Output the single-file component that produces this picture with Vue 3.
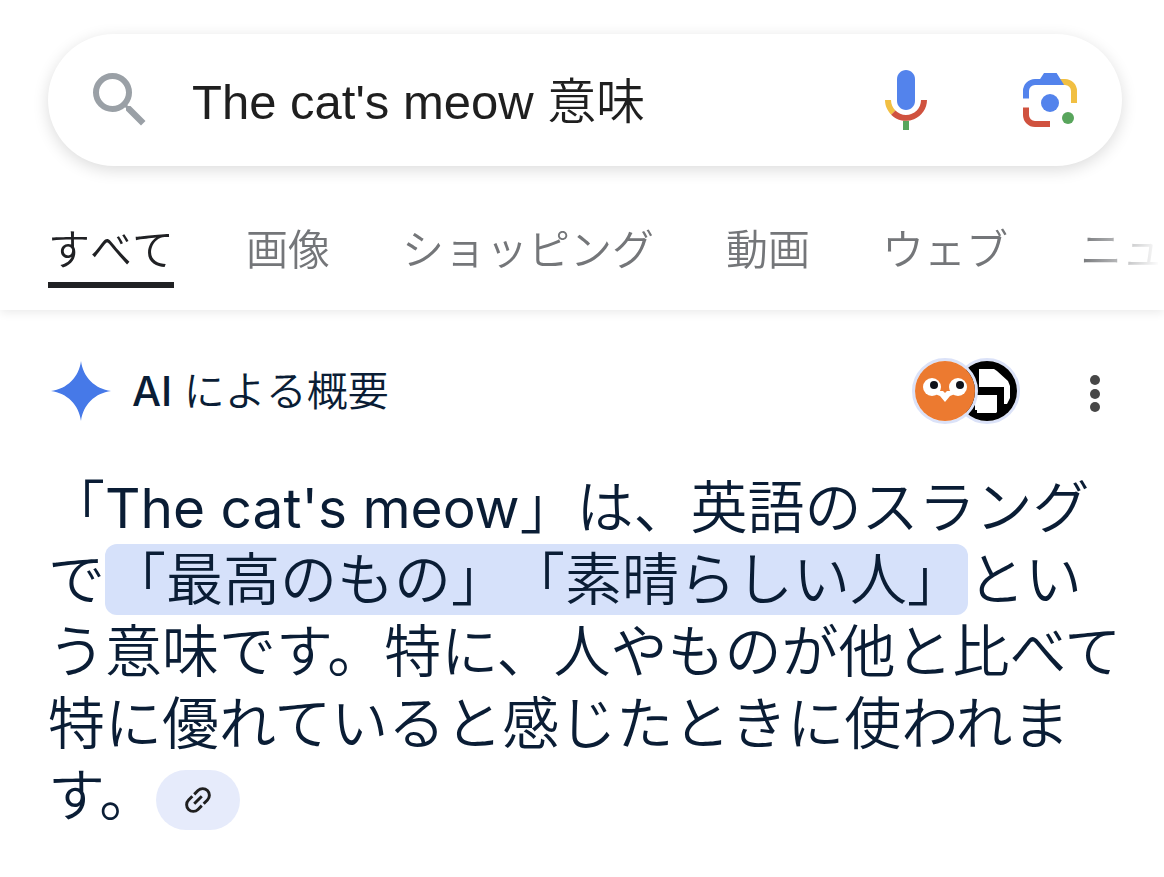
<template>
  <div class="search-page">
    <header class="page-header">
      <form class="search-bar" role="search" @submit.prevent>
        <button type="submit" class="icon-button" aria-label="検索">
          <svg viewBox="0 0 24 24" fill="#9aa0a6">
            <path d="M15.5 14h-.79l-.28-.27A6.47 6.47 0 0 0 16 9.5 6.5 6.5 0 1 0 9.5 16c1.61 0 3.09-.59 4.23-1.57l.27.28v.79l5 4.99L20.49 19l-4.99-5zm-6 0C7.01 14 5 11.99 5 9.5S7.01 5 9.5 5 14 7.01 14 9.5 11.99 14 9.5 14z" />
          </svg>
        </button>
        <input v-model="query" class="search-input" type="text" aria-label="検索キーワード">
        <button type="button" class="icon-button" aria-label="音声検索">
          <svg viewBox="0 0 24 24">
            <path fill="#5383ec" d="M12 15.3c1.66 0 3-1.34 3-3V5c0-1.66-1.34-3-3-3S9 3.34 9 5v7.3c0 1.66 1.34 3 3 3z" />
            <path fill="#58a55c" d="M11 18.9h2V22h-2z" />
            <path fill="#f1bf42" d="M7.1 16.9C5.8 15.6 5 13.9 5 12h2c0 1.4.56 2.6 1.47 3.5z" />
            <path fill="#d0523f" d="M12 17c-1.38 0-2.63-.58-3.54-1.5L7.05 16.9A7 7 0 0 0 19 12h-2c0 2.8-2.24 5-5 5z" />
          </svg>
        </button>
        <button type="button" class="icon-button" aria-label="画像で検索">
          <svg viewBox="0 0 24 24">
            <path fill="#f1bf42" d="M15 5h2a4 4 0 0 1 4 4v4h-2V9a2 2 0 0 0-2-2h-2z" />
            <path fill="#5383ec" d="M3 11.5V9a4 4 0 0 1 4-4h1.7L10 3h4.2l2.5 4H7a2 2 0 0 0-2 2v2.5z" />
            <path fill="#d0523f" d="M3 14.5h2V17a2 2 0 0 0 2 2h5v2H7a4 4 0 0 1-4-4z" />
            <circle cx="12" cy="13" r="3" fill="#5383ec" />
            <circle cx="18" cy="18" r="2" fill="#58a55c" />
          </svg>
        </button>
      </form>

      <nav class="tabs">
        <a
          v-for="tab in tabs"
          :key="tab"
          href="#"
          :class="['tab', { active: tab === activeTab }]"
          @click.prevent="activeTab = tab"
        >{{ tab }}</a>
      </nav>
    </header>

    <main class="overview">
      <div class="overview-header">
        <svg class="spark" viewBox="0 0 60 60">
          <path fill="#4679e8" d="M30 0C32 16 44 28 60 30 44 32 32 44 30 60 28 44 16 32 0 30 16 28 28 16 30 0z" />
        </svg>
        <h2><span class="latin">AI</span> による概要</h2>

        <div class="sources">
          <!-- フクロウのアイコン -->
          <svg class="source" viewBox="0 0 60 60">
            <rect width="60" height="60" fill="#ec7a30" />
            <circle cx="17" cy="26" r="9" fill="#fff" />
            <circle cx="43" cy="26" r="9" fill="#fff" />
            <path fill="#fff" d="M20 33l4-3h4l2 2 2-2h4l4 3-5 2-5 6-5-6z" />
            <circle cx="19" cy="24" r="4" fill="#10131c" />
            <circle cx="45" cy="24" r="4" fill="#10131c" />
          </svg>
          <!-- 白黒のロゴ -->
          <svg class="source" viewBox="0 0 60 60">
            <rect width="60" height="60" fill="#000" />
            <path fill="#fff" d="M22 8h15l3 2 11 10 2 5v12l-3 6h-3V26H22z" />
            <path fill="#fff" d="M20 34h20v17l-1 1H20v-3h-2V38h2z" />
          </svg>
        </div>

        <button type="button" class="more-button" aria-label="その他">
          <svg viewBox="0 0 12 40" fill="#474747">
            <circle cx="6" cy="6" r="5" />
            <circle cx="6" cy="20" r="5" />
            <circle cx="6" cy="33" r="5" />
          </svg>
        </button>
      </div>

      <p class="answer">
        「<span class="phrase">The cat's meow</span>」は、英語のスラングで<mark>「最高のもの」「素晴らしい人」</mark>という意味です。特に、人やものが他と比べて特に優れていると感じたときに使われます。<button type="button" class="link-chip" aria-label="関連リンク">
          <svg viewBox="0 0 24 24" fill="none" stroke="#1f1f1f" stroke-width="2.2">
            <g transform="rotate(-45 12 12)">
              <path d="M11 17H7A5 5 0 0 1 7 7h4M13 7h4a5 5 0 0 1 0 10h-4M8 12h8" />
            </g>
          </svg>
        </button>
      </p>
    </main>
  </div>
</template>

<script setup>
import { ref } from 'vue'

const query = ref("The cat's meow 意味")
const tabs = ['すべて', '画像', 'ショッピング', '動画', 'ウェブ', 'ニュース']
const activeTab = ref('すべて')
</script>

<style>
body {
  margin: 0;
  background: #fff;
}
</style>

<style scoped>
.search-page {
  font-family: "Liberation Sans", "Noto Sans CJK JP", sans-serif;
  color: #1f1f1f;
  overflow: hidden;
}

button {
  padding: 0;
  border: none;
  background: none;
  cursor: pointer;
}

svg {
  display: block;
}

.page-header {
  padding-top: 34px;
  box-shadow: 0 2px 10px rgba(0, 0, 0, 0.09);
}

.search-bar {
  display: flex;
  align-items: center;
  height: 132px;
  margin: 0 42px 0 48px;
  padding: 0 36px;
  box-sizing: border-box;
  border-radius: 66px;
  background: #fff;
  box-shadow: 0 4px 16px rgba(0, 0, 0, 0.14);
}

.icon-button {
  flex: none;
  width: 72px;
  height: 72px;
}

.icon-button + .icon-button {
  margin-left: 72px;
}

.search-input {
  flex: 1;
  min-width: 0;
  margin-left: 36px;
  padding: 0 0 6px;
  border: none;
  outline: none;
  background: none;
  font-family: inherit;
  font-size: 49px;
  font-weight: 350;
  color: #1f1f1f;
}

.tabs {
  display: flex;
  gap: 72px;
  margin-top: 48px;
  padding: 0 0 22px 48px;
  overflow: hidden;
  mask-image: linear-gradient(to right, #000 calc(100% - 84px), transparent calc(100% - 4px));
}

.tab {
  flex: none;
  height: 68px;
  border-bottom: 6px solid transparent;
  font-family: "Noto Sans CJK JP", sans-serif;
  font-size: 42px;
  font-weight: 350;
  font-kerning: none;
  line-height: 66px;
  white-space: nowrap;
  text-decoration: none;
  color: #747679;
}

.tab.active {
  border-color: #202124;
  color: #202124;
}

.overview {
  padding: 48px 30px 40px 48px;
  color: #0a1d35;
}

.overview-header {
  display: flex;
  align-items: center;
  height: 66px;
  margin-bottom: 48px;
}

.spark {
  width: 60px;
  height: 60px;
  margin: 0 21px 0 3px;
}

.overview-header h2 {
  flex: 1;
  margin: 0;
  padding-bottom: 6px;
  font-family: Inter, "Noto Sans CJK JP", sans-serif;
  font-size: 41px;
  font-weight: 350;
  font-kerning: none;
}

.overview-header .latin {
  font-weight: 500;
}

.sources {
  display: flex;
}

.source {
  position: relative;
  width: 60px;
  height: 60px;
  border: 3px solid #dbe2f8;
  border-radius: 50%;
}

.source:first-child {
  z-index: 1;
}

.source + .source {
  margin-left: -24px;
}

.more-button {
  width: 72px;
  height: 72px;
  margin: 6px 3px 0 39px;
}

.more-button svg {
  width: 12px;
  height: 40px;
  margin: 0 auto;
}

.answer {
  margin: 0;
  font-family: Inter, "Noto Sans CJK JP", sans-serif;
  font-size: 57px;
  font-weight: 350;
  line-height: 72px;
  text-spacing-trim: space-all;
}

.answer .phrase {
  font-size: 55px;
  font-weight: 400;
}

.answer mark {
  padding: 1px 4px;
  border-radius: 12px;
  background: #d6e1fa;
  color: inherit;
}

.link-chip {
  display: inline-flex;
  align-items: center;
  justify-content: center;
  width: 84px;
  height: 60px;
  border-radius: 30px;
  background: #e6ebfb;
  vertical-align: middle;
}

.link-chip svg {
  width: 32px;
  height: 32px;
}
</style>
